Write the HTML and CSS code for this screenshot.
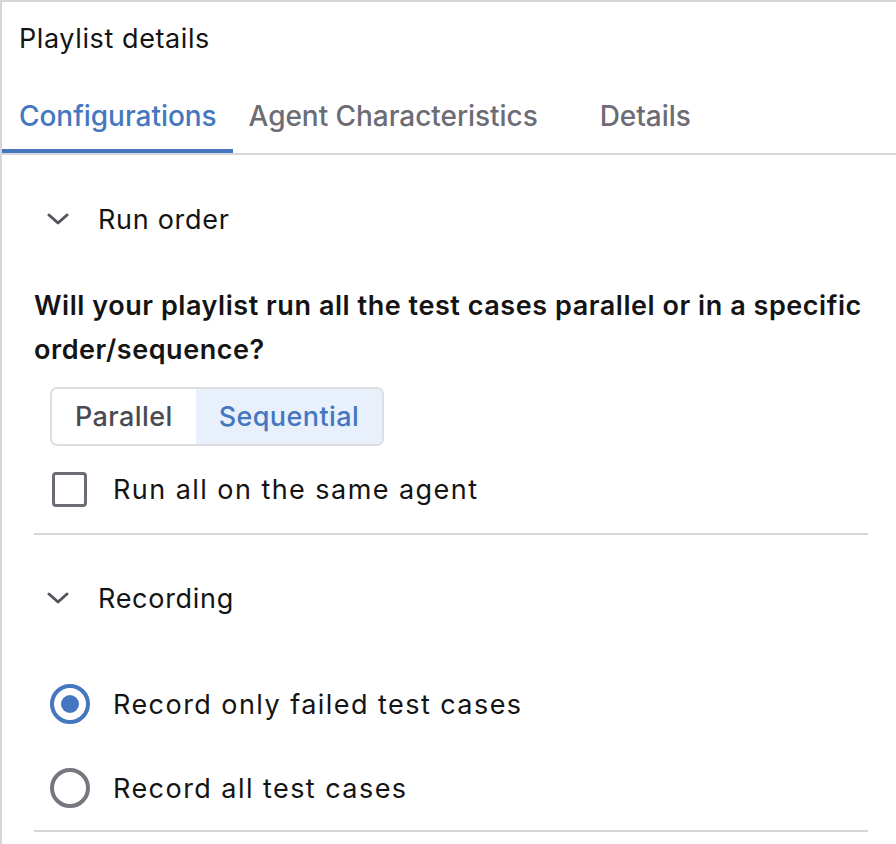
FILE: index.html
```html
<!DOCTYPE html>
<html lang="en">
<head>
<meta charset="utf-8">
<title>Playlist details</title>
<link rel="stylesheet" href="styles.css">
</head>
<body>
<div class="panel">
  <div class="title">Playlist details</div>
  <div class="tabs">
    <div class="tab tab-active">Configurations</div>
    <div class="tab tab-agent">Agent Characteristics</div>
    <div class="tab tab-details">Details</div>
  </div>
  <div class="content">
    <div class="section">
      <div class="section-head">
        <svg class="chevron" width="24" height="12" viewBox="0 0 24 12"><path d="M3 2 L12 10 L21 2" fill="none" stroke="#55555e" stroke-width="3" stroke-linecap="round" stroke-linejoin="round"/></svg>
        <span class="section-title">Run order</span>
      </div>
      <p class="question">Will your playlist run all the test cases parallel or in a specific order/sequence?</p>
      <div class="segmented">
        <div class="seg">Parallel</div>
        <div class="seg seg-active">Sequential</div>
      </div>
      <label class="check-row">
        <span class="checkbox"></span>
        <span class="row-label">Run all on the same agent</span>
      </label>
    </div>
    <div class="section section-rec">
      <div class="section-head">
        <svg class="chevron" width="24" height="12" viewBox="0 0 24 12"><path d="M3 2 L12 10 L21 2" fill="none" stroke="#55555e" stroke-width="3" stroke-linecap="round" stroke-linejoin="round"/></svg>
        <span class="section-title">Recording</span>
      </div>
      <div class="radio-list">
        <div class="radio-row">
          <span class="radio radio-on"><span class="dot"></span></span>
          <span class="row-label">Record only failed test cases</span>
        </div>
        <div class="radio-row">
          <span class="radio"></span>
          <span class="row-label">Record all test cases</span>
        </div>
      </div>
    </div>
  </div>
</div>
</body>
</html>
```

FILE: styles.css
```css
* { box-sizing: border-box; }
html, body { margin: 0; padding: 0; background: #fff; }
body {
  font-family: Inter, "Noto Sans", "Liberation Sans", sans-serif;
  color: #141414;
  width: 896px;
  height: 844px;
  overflow: hidden;
}
.panel {
  border-top: 2px solid #d6d6da;
  border-left: 2px solid #d6d6da;
  height: 844px;
}
.title {
  font-size: 27px;
  line-height: 32px;
  padding: 21px 17px 0;
  letter-spacing: 0.6px;
}
.tabs {
  display: flex;
  margin-top: 44px;
  border-bottom: 2px solid #d6d6da;
}
.tab {
  font-size: 28px;
  line-height: 34px;
  font-weight: 500;
  color: #6c6c75;
  padding: 0 16px 16px;
  border-bottom: 4px solid transparent;
  letter-spacing: -0.05px;
}
.tab-active {
  color: #4577c0;
  border-bottom-color: #4577c0;
  padding-left: 17px;
  padding-right: 16px;
}
.tab-details { margin-left: 30px; }
.content {
  padding: 32px 28px 0 32px;
}
.section {
  border-bottom: 2px solid #d6d6da;
}
.section-head {
  display: flex;
  align-items: center;
  height: 64px;
  padding-left: 12px;
}
.chevron { flex: none; }
.section-title {
  font-size: 27px;
  margin-left: 28px;
  letter-spacing: 0.7px;
}
.question {
  margin: 33px 0 0;
  font-size: 27px;
  line-height: 44px;
  font-weight: 600;
  letter-spacing: 0.55px;
}
.segmented {
  display: inline-flex;
  margin: 15px 0 0 16px;
  border: 2px solid #dedee2;
  border-radius: 7px;
  overflow: hidden;
  height: 59px;
}
.seg {
  display: flex;
  align-items: center;
  padding: 0 23px;
  font-size: 27px;
  font-weight: 500;
  color: #4a4a52;
  letter-spacing: 0.4px;
}
.seg-active {
  background: #e8f0fb;
  color: #4577c0;
}
.check-row {
  display: flex;
  align-items: center;
  margin: 26px 0 26px 18px;
}
.checkbox {
  width: 35px;
  height: 35px;
  border: 3px solid #6c6c75;
  border-radius: 4px;
  flex: none;
}
.row-label {
  font-size: 27px;
  letter-spacing: 1.45px;
}
.check-row .row-label { margin-left: 26px; }
.section-rec .section-head { margin-top: 31px; }
.radio-list { padding-top: 32px; }
.radio-row {
  display: flex;
  align-items: center;
  height: 84px;
  padding-left: 16px;
}
.radio {
  width: 40px;
  height: 40px;
  border-radius: 50%;
  border: 4px solid #76767e;
  display: flex;
  align-items: center;
  justify-content: center;
  flex: none;
}
.radio-on { border-color: #4577c0; }
.dot {
  width: 18px;
  height: 18px;
  border-radius: 50%;
  background: #4577c0;
}
.radio-row .row-label { margin-left: 23px; }
```
